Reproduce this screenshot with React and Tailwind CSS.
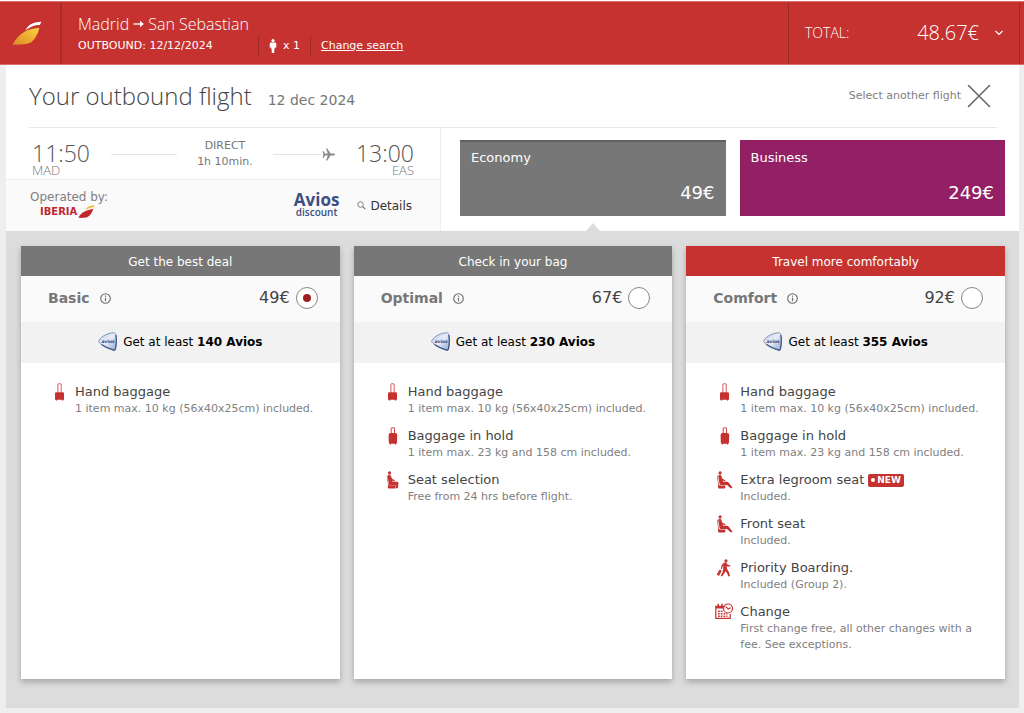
import { useState } from 'react'

const RED = '#c5322f'

function WingLogo() {
  return (
    <svg width="30" height="24" viewBox="0 0 30 24" aria-hidden="true">
      <defs>
        <linearGradient id="wing" x1="1" y1="0" x2="0" y2="1">
          <stop offset="0" stopColor="#f8d64a" />
          <stop offset="0.45" stopColor="#efb030" />
          <stop offset="1" stopColor="#d98a2c" />
        </linearGradient>
      </defs>
      <path d="M0.5 23.5C3.5 18 8.500 12.500 15 9.500C18.500 8 23 7.300 27.300 6.800C26.500 11.500 23.500 17.500 19.500 21C15.500 23.800 7 23.800 0.500 23.500Z" fill="url(#wing)" />
      <path d="M13.500 9.500C15.500 4.500 20.500 1 29.500 0.800C28.800 2 28.300 3.300 28 4C22 4 17.500 6 13.500 9.500Z" fill="#fff" />
    </svg>
  )
}

function IberiaTail() {
  return (
    <svg width="17" height="13" viewBox="0 0 17 13" aria-hidden="true">
      <path d="M0.300 12.800C2.500 8.500 6.500 5.500 15.200 3.700C14.500 7 12.500 10.500 9.500 12C7 13 3.500 13 0.300 12.800Z" fill="#c1272d" />
      <path d="M7 5.200C8.500 2.300 11.500 0.500 16.600 0.200L15.600 2.300C12.500 2.500 9.500 3.700 7 5.200Z" fill="#f2b630" />
    </svg>
  )
}

function ArrowRight() {
  return (
    <svg width="11" height="10" viewBox="0 0 11 10" aria-hidden="true">
      <path d="M0.500 5H8" stroke="#fff" strokeWidth="1.300" fill="none" />
      <path d="M7 1.800L10.800 5L7 8.200Z" fill="#fff" />
    </svg>
  )
}

function Person() {
  return (
    <svg width="8" height="14" viewBox="0 0 8 14" fill="#fff" aria-hidden="true">
      <circle cx="4" cy="1.600" r="1.600" />
      <path d="M2.200 3.400H5.800C6.800 3.400 7.300 4 7.300 5V8.600H6.100V9.500H5.400L5.200 14H2.800L2.600 9.500H1.900V8.600H0.700V5C0.700 4 1.200 3.400 2.200 3.400Z" />
    </svg>
  )
}

function Plane() {
  return (
    <svg width="13" height="13" viewBox="0 0 13 13" fill="#8c8c8c" aria-hidden="true">
      <path d="M0.500 3.300H1.600L3.100 5.500H5.800L4 0.500H5.300L8.600 5.500H11.500C12.400 5.500 12.900 6 12.900 6.500S12.400 7.500 11.500 7.500H8.600L5.300 12.500H4L5.800 7.500H3.100L1.600 9.700H0.500L1.400 6.500Z" />
    </svg>
  )
}

function SearchIcon() {
  return (
    <svg width="9" height="9" viewBox="0 0 9 9" fill="none" stroke="#666" aria-hidden="true">
      <circle cx="3.500" cy="3.500" r="2.800" strokeWidth="0.800" />
      <path d="M5.700 5.700L8.300 8.200" strokeWidth="1.100" />
    </svg>
  )
}

function InfoIcon() {
  return (
    <svg width="11" height="11" viewBox="0 0 11 11" fill="none" stroke="#6b6b6b" aria-hidden="true">
      <circle cx="5.500" cy="5.500" r="4.800" strokeWidth="1.100" />
      <path d="M5.500 4.800V8.200" strokeWidth="1.200" />
      <path d="M5.500 2.600V3.800" strokeWidth="1.200" />
    </svg>
  )
}

function AviosShield() {
  return (
    <svg width="19" height="19" viewBox="0 0 19 19" aria-hidden="true">
      <defs>
        <linearGradient id="shield" x1="0" y1="0" x2="1" y2="1">
          <stop offset="0" stopColor="#c3cfe6" />
          <stop offset="0.5" stopColor="#e6ecf7" />
          <stop offset="1" stopColor="#8fa4cf" />
        </linearGradient>
      </defs>
      <path d="M1 8.200C3.500 4.200 9.500 1.200 15.500 0.800C17 0.700 17.600 1.300 17.800 2.500C18.500 7 18.500 12 17.500 16.500C17.200 18 16.300 18.500 15 17.900C10 16.500 3.500 13.500 1 10.200C0.500 9.500 0.500 8.900 1 8.200Z" fill="url(#shield)" stroke="#7b8cb4" strokeWidth="0.900" />
      <path d="M17.800 3C18.500 7 18.500 12 17.500 16.500C17.200 18 16.300 18.500 15 17.900C11.500 16.900 7 15 3.500 12.500" fill="none" stroke="#3f5688" strokeWidth="1.200" />
      <text x="3.500" y="10.800" fontSize="4.500" fontWeight="700" fontStyle="italic" fontFamily="DejaVu Sans, sans-serif" fill="#2e437c">avios</text>
    </svg>
  )
}

function HandBag() {
  return (
    <svg width="18" height="18" viewBox="0 0 18 18" fill={RED} aria-hidden="true">
      <path d="M7.900 9.500V1.300Q7.900 0.800 8.400 0.800H10.700Q11.200 0.800 11.200 1.300V9.500" fill="none" stroke={RED} strokeWidth="0.800" />
      <path d="M6.200 9.200H12.800Q14 9.200 14 10.400V16.800H13.200V17.400H11.800V16.800H7.200V17.400H5.800V16.800H5V10.400Q5 9.200 6.200 9.200Z" />
    </svg>
  )
}

function HoldBag() {
  return (
    <svg width="18" height="18" viewBox="0 0 18 18" fill={RED} aria-hidden="true">
      <path d="M8.200 6.500V1.300Q8.200 0.800 8.700 0.800H11Q11.500 0.800 11.500 1.300V6.500" fill="none" stroke={RED} strokeWidth="0.900" />
      <path d="M7.700 6H12.100Q14.300 6.200 14.200 8L14 15.600Q14 16.700 13.100 16.700V17.400H11.900V16.800H7.900V17.400H6.700V16.700Q5.800 16.700 5.800 15.600L5.600 8Q5.500 6.200 7.700 6Z" />
    </svg>
  )
}

function Seat() {
  return (
    <svg width="18" height="18" viewBox="0 0 18 18" fill={RED} aria-hidden="true">
      <circle cx="6.500" cy="1.900" r="1.600" />
      <path d="M4.300 4.300L3.800 5L5 13.500L4.800 16.300Q4.900 17.500 6 17.500H11.600Q12.700 17.500 12.700 16.300V14.600H7.200Q5.800 14.500 5.500 13Z" />
      <path d="M5.500 3.900Q7.300 3.500 7.800 4.800L9 7.700L11.900 9.200L11.500 10.200L9.200 9.500L9.700 10.700H14.300Q15.500 10.700 15.400 11.900L15 17.300H12.900L13.200 14.400H7.600Q6.200 14.300 5.900 13L4.700 5.800Q4.500 4.100 5.500 3.900Z" />
    </svg>
  )
}

function LegroomSeat() {
  return (
    <svg width="18" height="18" viewBox="0 0 18 18" fill={RED} aria-hidden="true">
      <circle cx="5.100" cy="1.900" r="1.600" />
      <path d="M2.500 4.300L2 5L3.200 13.500L3 16.300Q3.100 17.500 4.200 17.500H9.200Q10.300 17.500 10.300 16.300V14.600H5.400Q4 14.500 3.700 13Z" />
      <path d="M4.100 3.900Q5.700 3.500 6.200 4.800L7.400 7.700L10.500 9.200L10.100 10.200L7.600 9.500L8.100 10.700H12Q13 10.700 13.500 11.500L17.500 16.500L16 17.500L12 14H6.200Q4.800 14 4.500 12.700L3.300 5.800Q3.100 4.100 4.100 3.900Z" />
    </svg>
  )
}

function Walker() {
  return (
    <svg width="18" height="18" viewBox="0 0 18 18" fill={RED} aria-hidden="true">
      <circle cx="11" cy="1.900" r="1.600" />
      <path d="M8.800 3.800Q10.800 3.200 11.900 4.400L13 6.100L15.300 6.300V7.500H12.300L11.800 7L12 10.100L13.900 13L15 17.100L13.400 17.500L12 14L10.300 12.300L9.200 14.500L7 17.500L5.600 16.700L7.500 13.500L8.200 10L8.300 6.700L7.700 7.300L6.900 10.200L5.800 9.900L6.600 6.300Z" />
      <path d="M4.700 10.500L6.700 11.700L4 16.900L1.700 15.600Z" />
    </svg>
  )
}

function CalendarClock() {
  return (
    <svg width="18" height="18" viewBox="0 0 18 18" fill="none" stroke={RED} aria-hidden="true">
      <path d="M10 3.300H0.800V15.400H15.200V11" strokeWidth="1.200" />
      <path d="M0.800 4.500H8" strokeWidth="2" />
      <path d="M3.200 0.800V4M7 0.800V4" strokeWidth="1.500" />
      <circle cx="13" cy="5.500" r="4.500" strokeWidth="1.200" fill="#fff" />
      <path d="M10.700 3.600L13.200 6L15.600 4.800" strokeWidth="1.100" />
      <path d="M3 8.200H8M3 10.700H12.500M3 13.200H12.500" strokeWidth="1.400" strokeDasharray="1.700 1.100" />
    </svg>
  )
}

const hand = { icon: HandBag, title: 'Hand baggage', text: '1 item max. 10 kg (56x40x25cm) included.' }
const hold = { icon: HoldBag, title: 'Baggage in hold', text: '1 item max. 23 kg and 158 cm included.' }

const FARES = [
  { name: 'Basic', tag: 'Get the best deal', price: '49€', avios: 140, items: [hand] },
  {
    name: 'Optimal', tag: 'Check in your bag', price: '67€', avios: 230,
    items: [hand, hold, { icon: Seat, title: 'Seat selection', text: 'Free from 24 hrs before flight.' }],
  },
  {
    name: 'Comfort', tag: 'Travel more comfortably', price: '92€', avios: 355, featured: true,
    items: [
      hand,
      hold,
      { icon: LegroomSeat, title: 'Extra legroom seat', text: 'Included.', isNew: true },
      { icon: LegroomSeat, title: 'Front seat', text: 'Included.' },
      { icon: Walker, title: 'Priority Boarding.', text: 'Included (Group 2).' },
      { icon: CalendarClock, title: 'Change', text: 'First change free, all other changes with a fee. See exceptions.' },
    ],
  },
]

function Header() {
  return (
    <header className="mt-px flex h-16 border-y border-[#d9706e] bg-[#c5322f] text-white">
      <a href="#home" aria-label="Iberia" className="flex w-[62px] shrink-0 items-center border-r-2 border-[#a92b28] pl-3">
        <WingLogo />
      </a>
      <div className="flex flex-1 flex-col justify-center pt-0.5 pl-4">
        <h2 className="flex items-center gap-1 font-['Open_Sans','Noto_Sans',sans-serif] text-base leading-6 font-light">
          Madrid <ArrowRight /> San Sebastian
        </h2>
        <div className="flex items-center text-[11px] leading-5">
          <span className="w-[180px]">OUTBOUND: 12/12/2024</span>
          <span className="flex w-[53px] items-center gap-1.5 border-x border-[#9f2926] pl-2.5">
            <Person /> x 1
          </span>
          <a href="#search" className="ml-2.5 underline">Change search</a>
        </div>
      </div>
      <div className="mr-1 flex w-[232px] items-center border-x border-[#9f2926] pr-3.5 pl-4 font-['Open_Sans','Noto_Sans',sans-serif] font-light">
        <span className="text-sm">TOTAL:</span>
        <span className="ml-auto text-xl">48.67€</span>
        <button type="button" aria-label="Show price breakdown" className="ml-3.5 p-0.5">
          <svg width="8" height="6" viewBox="0 0 8 6" fill="none" stroke="#fff" strokeWidth="1.200" aria-hidden="true">
            <path d="M0.500 1L4 4.500L7.500 1" />
          </svg>
        </button>
      </div>
    </header>
  )
}

function Airport({ time, code, right }) {
  return (
    <div className={`font-['Open_Sans','Noto_Sans',sans-serif] font-light ${right ? 'text-right' : ''}`}>
      <div className="text-[23px] leading-[22px] text-[#555]">{time}</div>
      <div className="text-[13px] leading-3 text-[#777]">{code}</div>
    </div>
  )
}

function FlightSummary() {
  return (
    <div className="flex w-[435px] shrink-0 flex-col border-r border-[#eee]">
      <div className="flex h-[51px] justify-between px-[26px] pt-3.5">
        <Airport time="11:50" code="MAD" />
        <div className="mt-3 h-px w-[66px] bg-[#e4e4e4]" />
        <div className="-mt-1 text-center text-[11px] leading-4 text-[#777]">
          <div>DIRECT</div>
          <div>1h 10min.</div>
        </div>
        <div className="flex h-6 items-center">
          <div className="h-px w-[49px] bg-[#e4e4e4]" />
          <Plane />
        </div>
        <Airport time="13:00" code="EAS" right />
      </div>
      <div className="flex flex-1 items-center border-t border-[#eee] bg-[#fafafa] pr-7 pl-6">
        <div className="pb-1 text-xs leading-4 text-[#808080]">
          Operated by:
          <div className="flex h-3.5 items-center gap-px pl-2.5">
            <span className="text-[10px] leading-3 font-bold text-[#c1272d]">IBERIA</span>
            <IberiaTail />
          </div>
        </div>
        <div className="ml-auto pb-1 text-center font-['Open_Sans','Noto_Sans',sans-serif] text-[#3c4f82]">
          <div className="text-[17px] leading-4 font-bold">Avios</div>
          <div className="text-[10px] leading-2 font-semibold">discount</div>
        </div>
        <button type="button" className="ml-[18px] flex items-center gap-1 text-xs text-[#333]">
          <SearchIcon /> Details
        </button>
      </div>
    </div>
  )
}

function CabinButton({ name, price, selected }) {
  return (
    <button
      type="button"
      aria-pressed={!!selected}
      className={`relative flex flex-1 flex-col px-[11px] text-left text-white ${selected ? 'border-t-2 border-[#606060] bg-[#777] pt-[7px]' : 'bg-[#932064] pt-[9px]'}`}
    >
      <span className="text-[13px] leading-[18px]">{name}</span>
      <span className="mt-3.5 self-end text-lg leading-6">{price}</span>
      {selected && (
        <svg width="14" height="8" viewBox="0 0 14 8" className="absolute -bottom-[15px] left-1/2 -translate-x-1/2" aria-hidden="true">
          <path d="M0 8L7 0L14 8Z" fill="#dcdcdc" />
        </svg>
      )}
    </button>
  )
}

function FareCard({ fare, checked, onSelect }) {
  const id = `fare-${fare.name}`
  return (
    <section className="flex flex-col bg-white shadow-[0_3px_6px_rgba(0,0,0,0.25)]">
      <div className={`h-[30px] text-center text-xs leading-8 text-white ${fare.featured ? 'bg-[#c5322f]' : 'bg-[#777]'}`}>{fare.tag}</div>
      <div className="flex h-[46px] items-center bg-[#fafafa] pr-[22px] pb-0.5 pl-[27px]">
        <label htmlFor={id} className="text-sm font-bold text-[#777]">{fare.name}</label>
        <button type="button" aria-label={`About ${fare.name}`} className="ml-2.5"><InfoIcon /></button>
        <span className="ml-auto mr-1.5 text-base text-[#444]">{fare.price}</span>
        <input
          id={id}
          type="radio"
          name="fare"
          checked={checked}
          onChange={onSelect}
          className="m-0 grid size-[22px] appearance-none place-items-center rounded-full border border-[#888] bg-white before:size-[8px] before:rounded-full checked:before:bg-[#9e1f20]"
        />
      </div>
      <div className="flex h-[41px] items-center justify-center gap-1.5 bg-[#f2f2f2] pb-0.5 text-xs text-black">
        <AviosShield />
        <span>Get at least <b>{fare.avios} Avios</b></span>
      </div>
      <ul className="flex flex-col gap-2.5 pt-5 pr-5 pb-[26px] pl-[29px]">
        {fare.items.map((item) => (
          <li key={item.title} className="flex gap-[7px]">
            <span className="shrink-0"><item.icon /></span>
            <div>
              <h3 className="flex items-center gap-1 text-[13px] leading-[18px] text-[#444]">
                {item.title}
                {item.isNew && (
                  <span className="flex items-center gap-0.5 rounded-xs bg-[#c5322f] px-[3px] text-[9px] leading-[13px] font-bold text-white">
                    <span className="size-1 rounded-full bg-white" />
                    NEW
                  </span>
                )}
              </h3>
              <p className="text-[11px] leading-4 text-[#808080]">{item.text}</p>
            </div>
          </li>
        ))}
      </ul>
    </section>
  )
}

export default function App() {
  const [fare, setFare] = useState('Basic')
  return (
    <div className="min-h-screen bg-[#eee] font-['DejaVu_Sans',Verdana,sans-serif]">
      <Header />
      <main className="mr-[5px] ml-1.5 bg-white">
        <div className="mr-[22px] ml-[23px] flex h-[63px] items-center border-b border-[#e8e8e8]">
          <h1 className="font-['Open_Sans','Noto_Sans',sans-serif] text-2xl font-light text-[#444]">Your outbound flight</h1>
          <span className="ml-4 pt-2 text-sm text-[#777]">12 dec 2024</span>
          <button type="button" className="mr-1.5 ml-auto flex items-center gap-1.5 text-[11px] text-[#808080]">
            Select another flight
            <svg width="24" height="24" viewBox="0 0 24 24" stroke="#666" strokeWidth="1.600" strokeLinecap="round" aria-hidden="true">
              <path d="M1.500 1.500L22.500 22.500M22.500 1.500L1.500 22.500" />
            </svg>
          </button>
        </div>
        <div className="flex h-[103px]">
          <FlightSummary />
          <div className="flex flex-1 gap-3.5 pt-3 pr-3.5 pb-[15px] pl-[19px]">
            <CabinButton name="Economy" price="49€" selected />
            <CabinButton name="Business" price="249€" />
          </div>
        </div>
        <div className="grid grid-cols-3 gap-3.5 bg-[#dcdcdc] pt-[15px] pr-3.5 pb-[29px] pl-[15px]">
          {FARES.map((f) => (
            <FareCard key={f.name} fare={f} checked={fare === f.name} onSelect={() => setFare(f.name)} />
          ))}
        </div>
      </main>
    </div>
  )
}
